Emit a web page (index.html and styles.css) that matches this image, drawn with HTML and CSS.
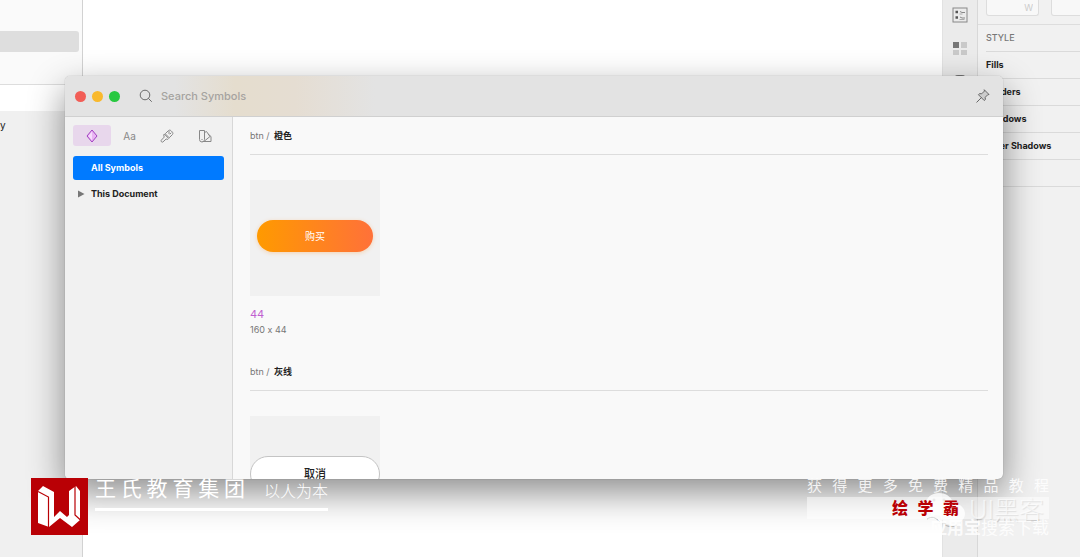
FILE: index.html
```html
<!DOCTYPE html>
<html lang="zh-CN">
  <head>
    <meta charset="UTF-8" />
    <meta name="viewport" content="width=device-width, initial-scale=1.0" />
    <title>Symbols</title>
    <link rel="stylesheet" href="styles.css">
  </head>
  <body>
    <div class="app">
      <aside class="layers">
        <div class="pages">
          <div class="page-selected"></div>
        </div>
        <div class="layers-filter"></div>
        <div class="layer-name">y</div>
      </aside>

      <main class="canvas"></main>

      <nav class="strip">
        <button class="strip-btn" aria-label="Inspector">
          <svg width="16" height="16" viewBox="0 0 16 16" fill="none" stroke="#888">
            <rect x="1" y="1" width="14" height="14" />
            <path d="M3.500 5h2.500M3.500 10.500h2.500" stroke="#555" stroke-width="2.500" />
            <path d="M8 4.500l2 1h3M8 10l2 1h3" />
            <path d="M7.500 7h3M7.500 12.500h5" stroke="#aaa" />
          </svg>
        </button>
        <button class="strip-btn" aria-label="Components">
          <svg width="16" height="16" viewBox="0 0 16 16" fill="#c9c9c9">
            <rect x="1" y="2" width="6" height="6" fill="#777" />
            <rect x="9" y="2" width="6" height="6" />
            <rect x="1" y="10" width="6" height="5" />
            <rect x="9" y="10" width="6" height="5" />
          </svg>
        </button>
        <button class="strip-btn" aria-label="Preview">
          <svg width="16" height="16" viewBox="0 0 16 16" fill="none" stroke="#777" stroke-width="2">
            <rect x="2" y="3" width="12" height="12" rx="4" />
          </svg>
        </button>
      </nav>

      <aside class="inspector">
        <div class="size-fields">
          <input type="text" value="W" aria-label="Width" />
          <input type="text" aria-label="Height" />
        </div>
        <h2 class="row row-head">STYLE</h2>
        <div class="row">Fills</div>
        <div class="row">Borders</div>
        <div class="row">Shadows</div>
        <div class="row">Inner Shadows</div>
        <div class="row"></div>
      </aside>
    </div>

    <section class="window">
      <header class="titlebar">
        <button class="light light-close" aria-label="Close"></button>
        <button class="light light-min" aria-label="Minimize"></button>
        <button class="light light-max" aria-label="Zoom"></button>
        <svg class="search-icon" width="14" height="14" viewBox="0 0 14 14" fill="none" stroke="#6c6c6c">
          <circle cx="6" cy="6" r="4.800" />
          <path d="M9.500 9.500L12.500 12.500" stroke-linecap="round" />
        </svg>
        <input class="search" type="text" placeholder="Search Symbols" aria-label="Search Symbols" />
        <button class="pin" aria-label="Pin window">
          <svg width="14" height="14" viewBox="0 0 14 14" fill="none" stroke="#666" stroke-linejoin="round" stroke-linecap="round">
            <path d="M8.500 1l4.500 4.500-1.300.3-2.500 2.500.2 2.200-1.200 1L2.500 5.800l1-1.200 2.200.2 2.500-2.500z" fill="#ccc" />
            <path d="M5.300 8.700L.8 13.200" />
          </svg>
        </button>
      </header>

      <div class="window-body">
        <nav class="side">
          <div class="tabs">
            <button class="tab tab-on" aria-label="Symbols">
              <svg width="14" height="14" viewBox="0 0 14 14" stroke="#a13fc0" stroke-linejoin="round">
                <path d="M7 1l5 6-5 6-5-6z" fill="#e9b4f3" />
                <path d="M7 2.500L3.500 7 7 11.500z" fill="#f6dcfb" stroke="none" />
              </svg>
            </button>
            <button class="tab">Aa</button>
            <button class="tab" aria-label="Layer Styles">
              <svg width="14" height="14" viewBox="0 0 14 14" fill="none" stroke="#888" stroke-linejoin="round" stroke-linecap="round">
                <path d="M5.500 4.500l3-3c.9-.6 1.800-.4 2.500.2l1.300 1.300c.7.8.8 1.700.2 2.500l-3 3z" />
                <path d="M4.500 5.300l4.200 4.200-.9.900-1.700-.4-3.200 3c-.9.700-2.400-.8-1.700-1.700l3-3.200-.4-1.700z" />
                <path d="M9 2.500v2M11 4l-1 1" />
              </svg>
            </button>
            <button class="tab" aria-label="Color Variables">
              <svg width="14" height="14" viewBox="0 0 14 14" fill="none" stroke="#888" stroke-linejoin="round">
                <path d="M1.500 1.500h5v9a2.500 2.500 0 0 1-5 0z" />
                <path d="M6.500 3.500l2-1 3.500 5-5.500 4.500M10 5l3 2.500v5H4.500" />
                <path d="M3.500 10.500h1" />
              </svg>
            </button>
          </div>
          <button class="item item-on">All Symbols</button>
          <button class="item">
            <svg class="arrow" width="8" height="8" viewBox="0 0 8 8" fill="#777"><path d="M1 0.500l6.500 3.500L1 7.500z" /></svg>
            This Document
          </button>
        </nav>

        <div class="symbols">
          <section class="group">
            <h3 class="group-head">btn / <b>橙色</b></h3>
            <div class="thumb">
              <button class="btn btn-orange">购买</button>
            </div>
            <div class="name">44</div>
            <div class="size">160 x 44</div>
          </section>
          <section class="group">
            <h3 class="group-head">btn / <b>灰线</b></h3>
            <div class="thumb">
              <button class="btn btn-line">取消</button>
            </div>
          </section>
        </div>
      </div>
    </section>

    <!-- video branding -->
    <div class="brand">
      <svg class="brand-logo" width="57" height="57" viewBox="0 0 57 57">
        <rect width="57" height="57" fill="#b90005" />
        <path d="M7 13l5-5 11 6v25l6-6 7 6 2-2V13l7-5 4 5v29l-8 7-12-9-11 9-11-4z" fill="#fff" />
        <path d="M7 13.500l10.500 5.500v30M44 8v29l5.500 5" fill="none" stroke="#b90005" stroke-width="1.200" />
      </svg>
      <div class="brand-line">
        <span class="brand-name">王氏教育集团</span>
        <span class="brand-motto">以人为本</span>
      </div>
    </div>

    <div class="account">
      <svg width="42" height="38" viewBox="0 0 42 38" fill="#fff" fill-opacity="0.8">
        <path d="M14 2C6 2 1 7 1 13c0 4 2 7 5 9l-1 5 5-3c2 .5 4 .7 6 .5 0-8 5-13 12-13C26 5 20 2 14 2z" />
        <path d="M27 12c-7 0-12 5-12 11s5 11 12 11c2 0 3 0 5-1l4 2-1-4c3-2 5-5 5-8 0-6-5-11-13-11z" />
        <path d="M2 28c5-3 8-2 13 3M20 34c4 2 8 2 12 0" fill="none" stroke="#aaa" />
        <g fill="#ccc"><circle cx="9" cy="9" r="1.500" /><circle cx="19" cy="9" r="1.500" /><circle cx="23" cy="20" r="1.500" /></g>
      </svg>
      <span>UI黑客</span>
    </div>

    <div class="promo">
      <div class="promo-top">获得更多免费精品教程</div>
      <div class="promo-box"><span class="promo-name">绘学霸</span></div>
      <div class="promo-bottom"><b>应用宝</b>搜索下载</div>
    </div>
  </body>
</html>
```
FILE: styles.css
```css
* {
  box-sizing: border-box;
}
body {
  margin: 0;
  position: relative;
  min-height: 100vh;
  overflow: hidden;
  background: #fff;
  color: #222;
  font-family: Inter, "Noto Sans CJK SC", sans-serif;
  font-size: 10px;
  font-feature-settings: "calt" 0;
  line-height: 16px;
}
button, input {
  margin: 0;
  padding: 0;
  border: none;
  background: none;
  color: inherit;
  font: inherit;
}
h2, h3 {
  margin: 0;
  font-size: 10px;
}
svg {
  display: block;
  flex: none;
}

/* editor behind the window */
.app {
  display: flex;
  min-height: 100vh;
}
.layers {
  width: 83px;
  border-right: 1px solid #d2d2d2;
  background: #f0f0f0;
}
.pages {
  height: 85px;
  padding: 31px 3px 0 0;
  border-bottom: 1px solid #ddd;
  background: #fafafa;
}
.page-selected {
  height: 21px;
  border-radius: 0 3px 3px 0;
  background: #dedede;
}
.layers-filter {
  height: 26px;
  background: #fff;
}
.layer-name {
  width: 5px;
  margin-top: 6px;
  text-align: right;
}
.canvas {
  flex: 1;
}
.strip {
  display: flex;
  flex-direction: column;
  align-items: center;
  gap: 17px;
  width: 36px;
  padding-top: 7px;
  border-left: 1px solid #e2e2e2;
  border-right: 1px solid #d8d8d8;
  background: #ebebeb;
}
.inspector {
  width: 102px;
  overflow: hidden;
  background: #f1f1f1;
}
.size-fields {
  display: flex;
  gap: 12px;
  height: 25px;
  padding-left: 8px;
  border-bottom: 1px solid #ddd;
}
.size-fields input {
  flex: none;
  width: 53px;
  height: 16px;
  padding-right: 5px;
  border: 1px solid #ddd;
  border-top: none;
  border-radius: 0 0 3px 3px;
  background: #f8f8f8;
  color: #ccc;
  font-size: 9px;
  text-align: right;
}
.row {
  height: 27px;
  margin-left: 8px;
  border-bottom: 1px solid #dadada;
  font-size: 9px;
  font-weight: 700;
  line-height: 25px;
  white-space: nowrap;
}
.row-head {
  color: #777;
  font-weight: 500;
}

/* symbols window */
.window {
  position: absolute;
  top: 76px;
  right: 77px;
  bottom: 78px;
  left: 65px;
  display: flex;
  flex-direction: column;
  overflow: hidden;
  border-radius: 5px;
  background: #f9f9f9;
  box-shadow: 0 0 1px rgba(0, 0, 0, 0.4), 0 14px 36px rgba(0, 0, 0, 0.45);
}
.titlebar {
  display: flex;
  align-items: center;
  flex: none;
  height: 41px;
  padding: 0 13px 0 10px;
  border-bottom: 1px solid #d0d0d0;
  background: linear-gradient(90deg, rgba(232, 221, 198, 0) 110px, #e5ddce 170px, #e5ddd2 230px, rgba(230, 222, 210, 0) 310px) #e3e3e3;
}
.light {
  width: 11px;
  height: 11px;
  margin-right: 6px;
  border-radius: 50%;
}
.light-close {
  background: #f25e57;
}
.light-min {
  background: #f9b92d;
}
.light-max {
  background: #28c840;
}
.search-icon {
  margin: 0 8px 0 13px;
}
.search {
  flex: 1;
  min-width: 0;
  font-size: 11px;
  font-weight: 500;
  outline: none;
}
.search::placeholder {
  color: #a5a3a0;
  opacity: 1;
}
.window-body {
  display: flex;
  flex: 1;
  min-height: 0;
}
.side {
  flex: none;
  width: 168px;
  padding: 8px;
  border-right: 1px solid #d8d8d8;
  background: #f1f1f1;
}
.tabs {
  display: flex;
  margin-bottom: 10px;
}
.tab {
  display: flex;
  align-items: center;
  justify-content: center;
  width: 38px;
  height: 21px;
  border-radius: 3px;
  color: #888;
  font-size: 10px;
}
.tab-on {
  background: #e8d7ec;
}
.item {
  display: flex;
  align-items: center;
  width: 100%;
  height: 24px;
  margin-bottom: 2px;
  padding-left: 18px;
  border-radius: 3px;
  font-size: 9px;
  font-weight: 700;
}
.item-on {
  background: #007aff;
  color: #fff;
}
.arrow {
  margin: 0 6px 0 -14px;
}
.symbols {
  flex: 1;
  overflow: hidden;
  padding: 0 15px 0 17px;
}
.group {
  margin-bottom: 15px;
}
.group-head {
  height: 38px;
  margin-bottom: 25px;
  border-bottom: 1px solid #ddd;
  color: #777;
  font-size: 9px;
  font-weight: 400;
  line-height: 38px;
}
.group-head b {
  margin-left: 2px;
  color: #222;
  font-weight: 700;
}
.thumb {
  display: flex;
  align-items: center;
  justify-content: center;
  width: 130px;
  height: 116px;
  margin-bottom: 10px;
  background: #f1f1f1;
}
.btn {
  border-radius: 18px;
}
.btn-orange {
  width: 116px;
  height: 32px;
  margin-bottom: 4px;
  background: linear-gradient(90deg, #ff9a00, #ff7139);
  box-shadow: 0 1px 4px rgba(255, 140, 30, 0.3);
  color: #fff;
}
.btn-line {
  width: 130px;
  height: 36px;
  border: 1px solid #c4c4c4;
  background: #fff;
  font-size: 11px;
  font-weight: 500;
}
.name {
  color: #c05fd0;
  font-size: 11px;
}
.size {
  color: #777;
  font-size: 9px;
}

/* branding over the frame */
.brand {
  position: absolute;
  bottom: 22px;
  left: 31px;
  display: flex;
  gap: 7px;
  color: #fff;
}
.brand-line {
  display: flex;
  align-items: center;
  justify-content: space-between;
  width: 233px;
  height: 33px;
  padding-bottom: 8px;
  border-bottom: 3px solid #fff;
}
.brand-name {
  width: 150px;
  font-size: 21px;
  text-align-last: justify;
}
.brand-motto {
  padding-top: 4px;
  font-size: 16px;
  font-weight: 300;
}
.promo {
  position: absolute;
  right: 31px;
  bottom: 19px;
  width: 242px;
  color: rgba(255, 255, 255, 0.85);
}
.promo-top {
  height: 20px;
  font-size: 15px;
  line-height: 18px;
  text-align-last: justify;
}
.promo-box {
  height: 22px;
  padding-left: 85px;
  background: rgba(255, 255, 255, 0.5);
}
.promo-name {
  display: block;
  width: 67px;
  color: #b90005;
  font-size: 16px;
  font-weight: 900;
  line-height: 22px;
  text-align-last: justify;
}
.promo-bottom {
  font-size: 17px;
  line-height: 19px;
  text-align: right;
}
.account {
  position: absolute;
  right: 36px;
  bottom: 28px;
  display: flex;
  align-items: center;
  gap: 2px;
  color: rgba(255, 255, 255, 0.6);
  font-size: 25px;
  font-weight: 300;
  text-shadow: 1px 1px 1px rgba(0, 0, 0, 0.2);
}
```
